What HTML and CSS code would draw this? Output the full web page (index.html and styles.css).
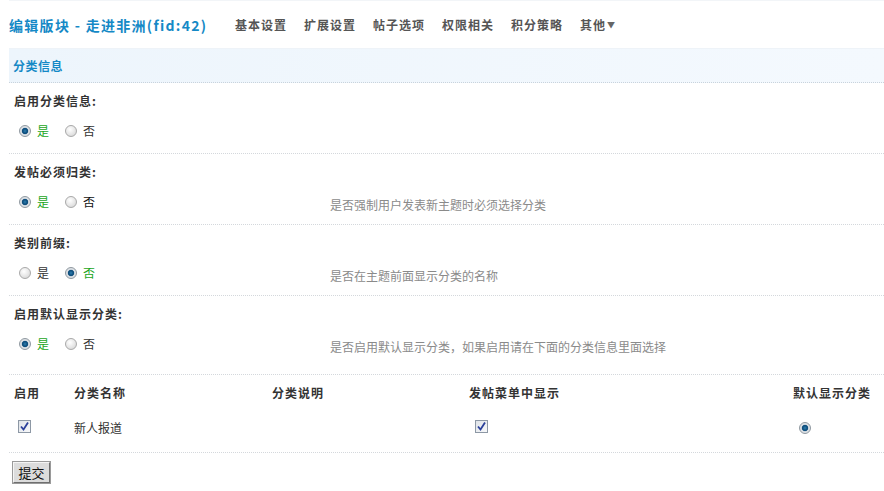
FILE: index.html
```html
<!DOCTYPE html>
<html>
<head>
<meta charset="utf-8">
<link rel="stylesheet" href="styles.css">
</head>
<body>
<div class="page">
  <div class="header">
    <h1 class="title">编辑版块 - 走进非洲(fid:42)</h1>
    <ul class="nav">
      <li>基本设置</li>
      <li>扩展设置</li>
      <li>帖子选项</li>
      <li>权限相关</li>
      <li>积分策略</li>
      <li>其他<span class="caret">▼</span></li>
    </ul>
  </div>

  <div class="band">分类信息</div>

  <div class="setting">
    <div class="label">启用分类信息:</div>
    <div class="row">
      <div class="choices">
        <span class="radio on"></span><span class="opt sel">是</span>
        <span class="radio"></span><span class="opt">否</span>
      </div>
    </div>
  </div>

  <div class="setting">
    <div class="label">发帖必须归类:</div>
    <div class="row">
      <div class="choices">
        <span class="radio on"></span><span class="opt sel">是</span>
        <span class="radio"></span><span class="opt dark">否</span>
      </div>
      <div class="desc">是否强制用户发表新主题时必须选择分类</div>
    </div>
  </div>

  <div class="setting">
    <div class="label">类别前缀:</div>
    <div class="row">
      <div class="choices">
        <span class="radio"></span><span class="opt">是</span>
        <span class="radio on"></span><span class="opt sel">否</span>
      </div>
      <div class="desc">是否在主题前面显示分类的名称</div>
    </div>
  </div>

  <div class="setting last">
    <div class="label">启用默认显示分类:</div>
    <div class="row">
      <div class="choices">
        <span class="radio on"></span><span class="opt sel">是</span>
        <span class="radio"></span><span class="opt">否</span>
      </div>
      <div class="desc">是否启用默认显示分类，如果启用请在下面的分类信息里面选择</div>
    </div>
  </div>

  <div class="grid">
    <div class="th">启用</div>
    <div class="th">分类名称</div>
    <div class="th">分类说明</div>
    <div class="th">发帖菜单中显示</div>
    <div class="th">默认显示分类</div>

    <div class="td"><span class="check c1"><svg viewBox="0 0 13 13" width="13" height="13"><path d="M3 6.5 L5.5 9.5 L10 2.5" fill="none" stroke="#2a3f9a" stroke-width="1.8"/></svg></span></div>
    <div class="td name">新人报道</div>
    <div class="td"></div>
    <div class="td"><span class="check c2"><svg viewBox="0 0 13 13" width="13" height="13"><path d="M3 6.5 L5.5 9.5 L10 2.5" fill="none" stroke="#2a3f9a" stroke-width="1.8"/></svg></span></div>
    <div class="td"><span class="radio on r3"></span></div>
  </div>

  <div class="actions">
    <button class="btn" type="button">提交</button>
  </div>
</div>
</body>
</html>
```

FILE: styles.css
```css
html, body {
  margin: 0;
  padding: 0;
  background: #fff;
}
body {
  font-family: "Noto Sans CJK SC", "Liberation Sans", sans-serif;
  font-size: 12px;
  color: #333;
}
.page {
  padding-left: 9px;
}
.header {
  display: flex;
  align-items: center;
  height: 49px;
  border-bottom: 1px solid #eef3f8;
  box-sizing: border-box;
  border-top: 1px solid #f2f5f8;
}
.title {
  margin: 0;
  font-size: 14px;
  font-weight: bold;
  color: #1589c6;
  letter-spacing: 1.3px;
  line-height: 20px;
  width: 226px;
  white-space: nowrap;
}
.nav {
  list-style: none;
  margin: 0;
  padding: 0;
  display: flex;
  gap: 17px;
}
.nav li {
  font-size: 12px;
  font-weight: bold;
  color: #555;
  letter-spacing: 1px;
  line-height: 20px;
}
.caret {
  font-size: 8px;
  margin-left: 1px;
  vertical-align: 2px;
  color: #666;
}
.band {
  height: 33px;
  line-height: 33px;
  background: linear-gradient(to right, #edf5fc, #f4f9fe);
  color: #1589c6;
  font-weight: bold;
  padding-left: 4px;
  letter-spacing: 0.5px;
  border-bottom: 1px dotted #c9d3dc;
}
.setting {
  padding: 8px 5px 12px;
  border-bottom: 1px dotted #d4d8dc;
}
.setting.last {
  padding-bottom: 20px;
}
.label {
  font-weight: bold;
  color: #333;
  line-height: 20px;
  letter-spacing: 1px;
  margin-bottom: 10px;
}
.row {
  display: flex;
  align-items: center;
  height: 20px;
}
.choices {
  width: 316px;
  display: flex;
  align-items: center;
}
.radio {
  display: inline-block;
  width: 12px;
  height: 12px;
  border-radius: 50%;
  box-sizing: border-box;
  border: 1px solid #a9a9a9;
  background: radial-gradient(circle at 40% 35%, #ffffff 0%, #e6e6e6 55%, #cfcfcf 100%);
  margin-left: 5px;
  margin-right: 6px;
}
.radio.on {
  background: radial-gradient(circle at 50% 50%, #2d7fb0 0, #0f4f7e 2.2px, #0f4f7e 2.8px, #d8dde2 3.6px, #e8ebee 100%);
  border-color: #8f98a0;
}
.opt {
  width: 23px;
  line-height: 20px;
  color: #333;
}
.opt.sel {
  color: #1aa51a;
}
.opt.dark {
  color: #111;
}
.desc {
  color: #8a8a8a;
  line-height: 20px;
  position: relative;
  top: 3px;
}
.grid {
  display: grid;
  grid-template-columns: 60px 198px 197px 324px 1fr;
  border-bottom: 1px dotted #d4d8dc;
}
.th {
  height: 36px;
  line-height: 36px;
  padding-left: 5px;
  font-weight: bold;
  color: #333;
  letter-spacing: 1px;
}
.td {
  height: 41px;
  box-sizing: border-box;
  padding-left: 5px;
  padding-bottom: 8px;
  display: flex;
  align-items: center;
}
.td.name {
  color: #333;
}
.check {
  display: inline-block;
  width: 13px;
  height: 13px;
  box-sizing: border-box;
  border: 1px solid #8d98a5;
  background: linear-gradient(135deg, #dfe3e8, #f7f8fa);
  position: relative;
}
.check svg {
  position: absolute;
  left: -1px;
  top: -1px;
}
.check.c1 {
  margin-left: 4px;
  margin-top: -3px;
}
.check.c2 {
  margin-left: 6px;
  margin-top: -3px;
}
.radio.r3 {
  margin-left: 6px;
  margin-top: 1px;
}
.actions {
  padding: 9px 4px;
}
.btn {
  font-family: "Noto Sans CJK SC", sans-serif;
  font-size: 13px;
  height: 21px;
  width: 37px;
  padding: 0;
  line-height: 17px;
  background: #dcdcdc;
  border: 1px solid;
  border-color: #f5f5f5 #6f6f6f #6f6f6f #f5f5f5;
  box-shadow: 0 0 0 1px #9a9a9a;
  color: #111;
}
```
